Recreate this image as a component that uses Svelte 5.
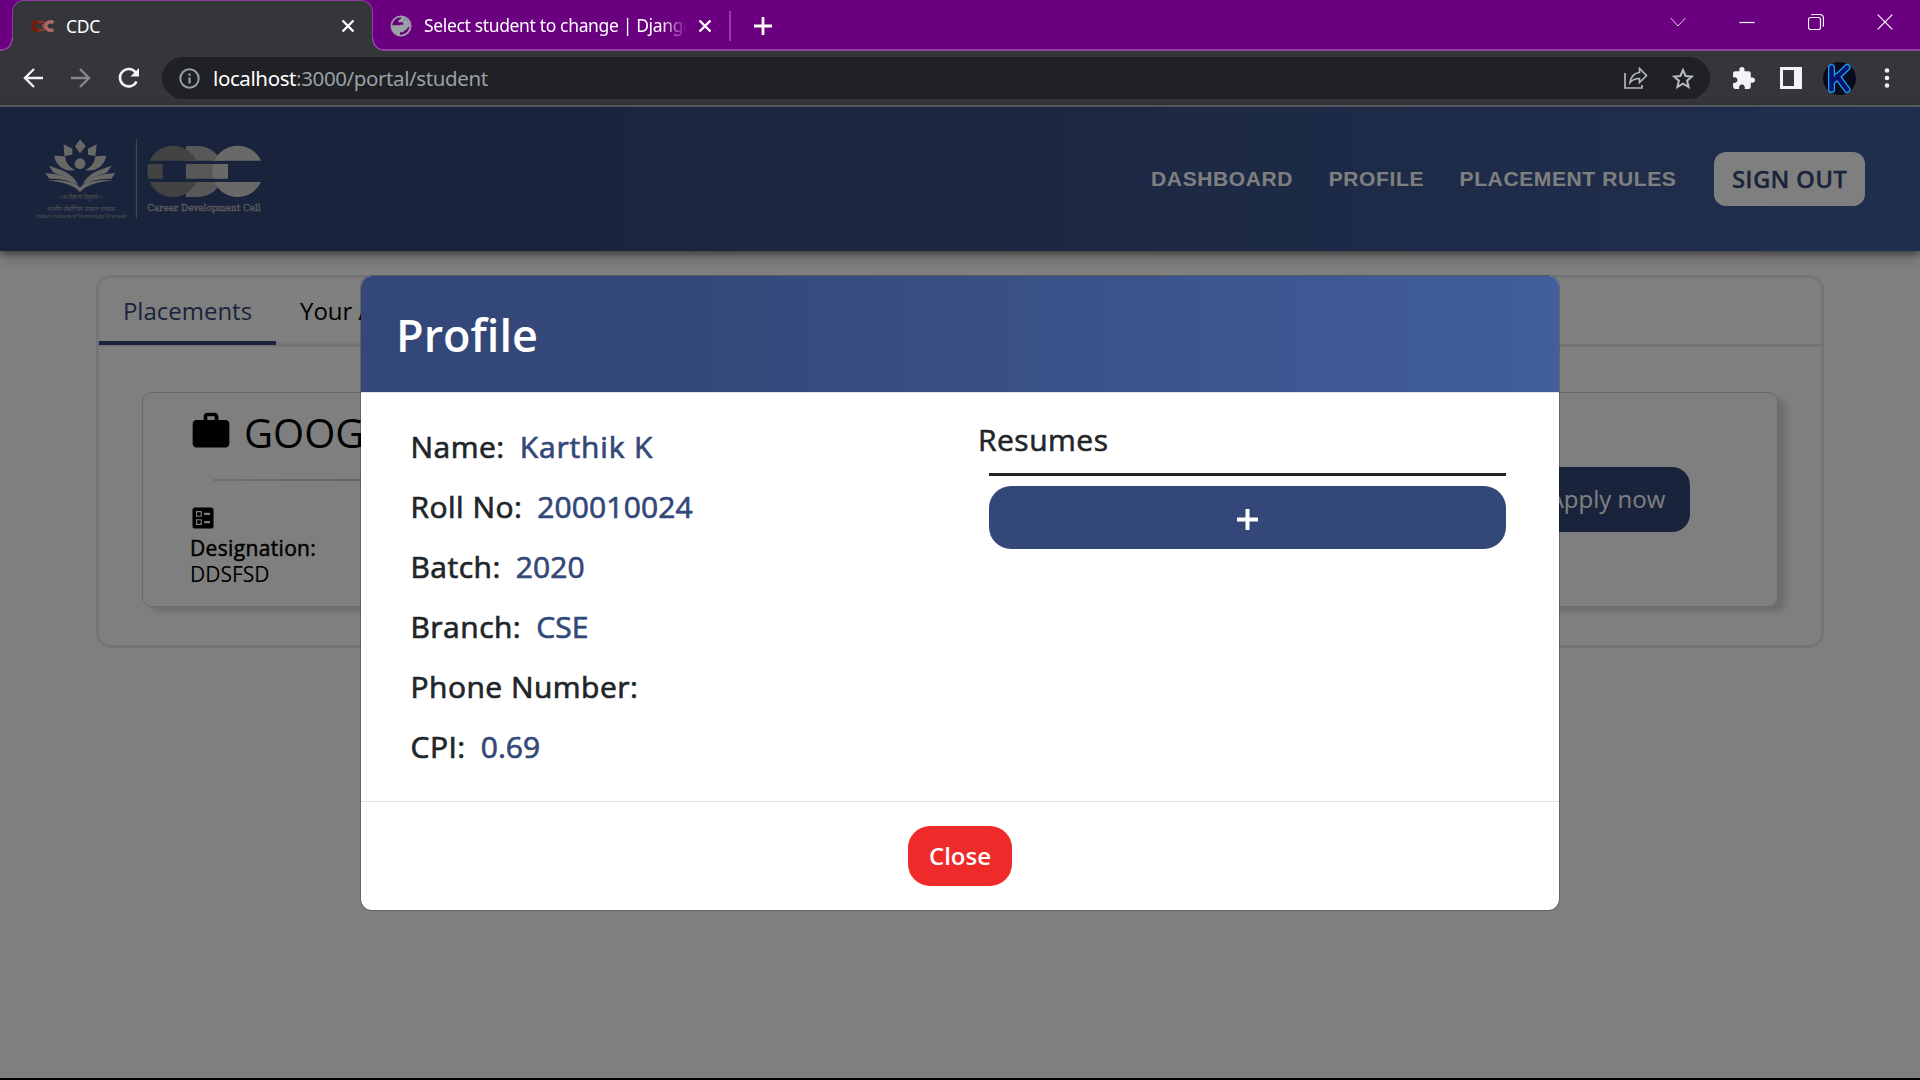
<script>
  const fields = [
    { label: 'Name:', value: 'Karthik K', wide: true },
    { label: 'Roll No:', value: '200010024' },
    { label: 'Batch:', value: '2020' },
    { label: 'Branch:', value: 'CSE' },
    { label: 'Phone Number:', value: '' },
    { label: 'CPI:', value: '0.69' }
  ];
</script>

<div class="window">
  <div class="tabstrip">
    <div class="tab active">
      <svg class="favicon" width="26" height="16" viewBox="0 0 26 16">
        <path d="M11 4.500A4.600 4.200 0 1 0 11 11.500" fill="none" stroke="#7c1a08" stroke-width="3.400" />
        <path d="M9 3.800h3.500a4.200 4.200 0 0 1 0 8.400H9" fill="none" stroke="#7e3a2c" stroke-width="2.600" />
        <path d="M13 8h4.500" stroke="#9a4a3c" stroke-width="3.600" />
        <path d="M24.500 4.500A5 4.200 0 1 0 24.500 11.500" fill="none" stroke="#ad6d62" stroke-width="3.400" />
      </svg>
      <span class="tabtext">CDC</span>
      <svg class="x" width="14" height="14" viewBox="0 0 14 14"><path d="M1.500 1.500l11 11M12.500 1.500l-11 11" /></svg>
    </div>
    <div class="tab second">
      <svg width="22" height="22" viewBox="0 0 22 22">
        <circle cx="11" cy="11" r="10.500" fill="#9aa0a6" />
        <path d="M2.300 10.300C2.600 5.800 6 2.600 10.800 2.200c.6 1.300-.3 2.300-1.700 2.600-1 .3-1 1.700-.6 2.400H12c1.600.2 1.800 1.600 1.200 2.600h-2.500c-.8.800-1.400.5-2.600.5z" fill="#6a0080" />
        <path d="M10 19.700v-2.500h2.600c1.800-.3 1.600-2.200 3.200-2.400 1.200-.2 1.500-.8 1.600-2.200l2.100-.8c-.6 4.600-4.500 8.200-9.500 7.900zM14.500 3.100c2.600 1.200 4.400 3.200 5 5.700-1.600 1.200-3.800.8-4.200-1-.2-1.600-1.300-1.300-1.300-2.700z" fill="#6a0080" />
        <path d="M14.500 2.500l4.500 4v3.500h-2.500c-1-.8-1.500-1.500-2.500-2z" fill="#9aa0a6" />
      </svg>
      <span class="tabtext fade">Select student to change | Django</span>
      <svg class="x" width="14" height="14" viewBox="0 0 14 14"><path d="M1.500 1.500l11 11M12.500 1.500l-11 11" /></svg>
    </div>
    <i class="sep"></i>
    <svg class="plus" width="18" height="18" viewBox="0 0 18 18"><path d="M9 0v18M0 9h18" stroke="#fff" stroke-width="2.800" /></svg>
    <div class="controls">
      <svg width="16" height="10" viewBox="0 0 16 10"><path d="M.7 1l7.300 8 7.300-8" stroke-width=".8" /></svg>
      <svg width="16" height="16" viewBox="0 0 16 16"><path d="M.5 8.500h15" /></svg>
      <svg width="16" height="16" viewBox="0 0 16 16"><rect x=".5" y="3.500" width="12" height="12" rx="2" /><path d="M3.500 1Q4 .5 5 .5h6.500q4 0 4 4V11q0 1-.7 1.500" /></svg>
      <svg width="16" height="16" viewBox="0 0 16 16"><path d="M.7.700l14.600 14.600M15.300.700L.7 15.300" /></svg>
    </div>
  </div>

  <div class="toolbar">
    <svg class="nav" width="20" height="20" viewBox="0 0 20 20"><path d="M20 10H1.800M11 1L2 10l9 9" stroke="#f1f3f4" /></svg>
    <svg class="nav" width="20" height="20" viewBox="0 0 20 20"><path d="M0 10h18.200M9 1l9 9-9 9" stroke="#85878a" /></svg>
    <svg class="nav" width="22" height="22" viewBox="0 0 22 22"><path d="M18.500 14.500A8.700 8.700 0 1 1 18 6" stroke="#f1f3f4" stroke-width="2.600" /><path d="M21 1v8.500h-8.500z" fill="#f1f3f4" /></svg>
    <div class="omnibox">
      <svg width="21" height="21" viewBox="0 0 21 21"><circle cx="10.500" cy="10.500" r="9.200" fill="none" stroke="#9aa0a6" stroke-width="2" /><path d="M10.500 9.500v6M10.500 5.500v2.200" stroke="#9aa0a6" stroke-width="2.200" /></svg>
      <span class="url"><b>localhost</b>:3000/portal/student</span>
      <svg class="share" width="24" height="22" viewBox="0 0 24 22" fill="none" stroke="#b4b7ba" stroke-width="1.700"><path d="M1 6v15h17v-3" /><path d="M6 15.500C7 9.500 10 6 15.500 5.500V1.500L22.500 8.500l-7 7v-4C11 11.500 8.500 12.500 6 15.500z" /></svg>
      <svg class="star" width="22" height="21" viewBox="0 0 22 21"><path d="M11 2l2.600 6 6.400.5-4.900 4.200 1.500 6.300L11 15.600 5.400 19l1.500-6.300L2 8.500 8.400 8z" fill="none" stroke="#b8bbbe" stroke-width="2" /></svg>
    </div>
    <svg class="puzzle" width="25" height="25" viewBox="0 0 24 24" fill="#f1f3f4"><path d="M20.500 11H19V7c0-1.100-.9-2-2-2h-4V3.500a2.500 2.500 0 0 0-5 0V5H4c-1.100 0-2 .9-2 2v3.800h1.500c1.500 0 2.700 1.200 2.700 2.700S5 16.200 3.500 16.200H2V20c0 1.100.9 2 2 2h3.800v-1.500c0-1.500 1.200-2.700 2.700-2.700s2.700 1.200 2.700 2.700V22H17c1.100 0 2-.9 2-2v-4h1.500a2.500 2.500 0 0 0 0-5z" /></svg>
    <svg class="panel" width="22" height="22" viewBox="0 0 22 22"><path fill="#f1f3f4" fill-rule="evenodd" d="M0 0h22v22H0zM3 3v16h11V3z" /></svg>
    <svg class="avatar" width="33" height="33" viewBox="0 0 33 33">
      <circle cx="16.500" cy="16.500" r="16.500" fill="#060a1c" />
      <path d="M8.500 5.500v22M24 5.500L11 18M14 14l10 13.500" fill="none" stroke="#16a4ff" stroke-width="7" stroke-linecap="round" />
      <path d="M8.500 5.500v22M24 5.500L11 18M14 14l10 13.500" fill="none" stroke="#04146a" stroke-width="4.500" stroke-linecap="round" />
    </svg>
    <svg class="dots" width="6" height="20" viewBox="0 0 6 20" fill="#f1f3f4"><circle cx="3" cy="2.500" r="2.300" /><circle cx="3" cy="10" r="2.300" /><circle cx="3" cy="17.500" r="2.300" /></svg>
  </div>

  <div class="page">
    <header>
      <svg class="logo" width="260" height="120" viewBox="0 0 780 360">
        <g fill="#d0d1cf">
          <path d="M180 58l17 21-17 21-15-21zM131 73l26 13v18l-24 4zM230 73l-26 13v18l22 4z" />
          <circle cx="180" cy="131" r="16" />
          <path d="M102 108c12-2 22 0 34 2 1 18 10 30 30 40-32 6-56-10-64-42zM259 108c-12-2-22 0-34 2-1 18-10 30-30 40 32 6 56-10 64-42z" />
          <path d="M87 137c35 12 70 20 88 58-22-24-55-28-76-38zM275 137c-35 12-70 20-88 58 22-24 55-28 74-38z" />
          <path d="M76 160c40 2 78 8 100 38-28-20-60-22-88-22zM286 160c-40 2-78 8-100 38 28-20 60-22 88-22z" />
          <path d="M82 182c40-4 76 0 98 20 22-20 58-24 98-20-40 2-76 10-98 34-22-24-58-32-98-34z" />
        </g>
        <g fill="#a4a5a8" text-anchor="middle" class="tiny">
          <text x="182" y="238" font-size="17" textLength="130" lengthAdjust="spacingAndGlyphs">॥ सा विद्या या विमुक्तये ॥</text>
          <text x="182" y="272" font-size="18" textLength="204" lengthAdjust="spacingAndGlyphs">भारतीय प्रौद्योगिकी संस्थान धारवाड</text>
          <text x="183" y="293" font-size="14.500" textLength="270" lengthAdjust="spacingAndGlyphs">Indian Institute of Technology Dharwad</text>
        </g>
        <path d="M349 57v240" stroke="#96979a" stroke-width="3" />
        <path fill="#b0b1b3" d="M498 78h32c34 0 61 18 73 44H498zM498 132h110v44H498zM498 186h105c-12 27-39 45-73 45h-32z" />
        <path fill="#868789" d="M389 122a77 77 0 0 1 140 0zM389 186a77 77 0 0 0 140 0zM384 132h45q-4 22 0 44h-45q-4-22 0-44z" />
        <path fill="#d2d3d3" d="M583 122a77 77 0 0 1 140 0zM583 186a77 77 0 0 0 140 0zM580 132h44v44h-44q-5-22 0-44z" />
        <text class="slab" x="382" y="274" font-size="28" textLength="340" lengthAdjust="spacingAndGlyphs" fill="#b4b5b7">Career Development Cell</text>
      </svg>
      <nav>
        <a>DASHBOARD</a>
        <a>PROFILE</a>
        <a>PLACEMENT RULES</a>
        <span class="signout">SIGN OUT</span>
      </nav>
    </header>
    <main>
      <div class="tabs">
        <span class="current">Placements</span>
        <span class="other">Your Applications</span>
      </div>
      <section class="job">
        <div class="info">
          <div class="company">
            <svg width="44" height="44" viewBox="0 0 24 24"><path d="M20 6h-4V4c0-1.110-.89-2-2-2h-4c-1.110 0-2 .89-2 2v2H4c-1.110 0-1.990.89-1.990 2L2 19c0 1.110.89 2 2 2h16c1.110 0 2-.89 2-2V8c0-1.110-.89-2-2-2zm-6 0h-4V4h4v2z" /></svg>
            <span>GOOGLE</span>
          </div>
          <hr />
          <svg class="ballot" width="28" height="28" viewBox="0 0 24 24"><path d="M13 9.500h5v-2h-5v2zm0 7h5v-2h-5v2zm6 4.500H5c-1.100 0-2-.9-2-2V5c0-1.100.9-2 2-2h14c1.100 0 2 .9 2 2v14c0 1.100-.9 2-2 2zM6 11h5V6H6v5zm1-4h3v3H7V7zM6 18h5v-5H6v5zm1-4h3v3H7v-3z" /></svg>
          <div class="designation">Designation:</div>
          <div class="role">DDSFSD</div>
        </div>
        <span class="apply">Apply now</span>
      </section>
    </main>

    <div class="backdrop">
      <div class="modal">
        <div class="mhead">Profile</div>
        <div class="mbody">
          <div class="fields">
            {#each fields as f}
              <div class="field"><span>{f.label}</span><span class="val" class:wide={f.wide}>{f.value}</span></div>
            {/each}
          </div>
          <div class="resumes">
            <div class="rtitle">Resumes</div>
            <div class="rule"></div>
            <div class="add"><svg width="21" height="21" viewBox="0 0 21 21"><path d="M10.500 0v21M0 10.500h21" stroke="#fff" stroke-width="4" /></svg></div>
          </div>
        </div>
        <div class="mfoot"><span class="close">Close</span></div>
      </div>
    </div>
  </div>
</div>

<style>
  :global(body) { margin: 0; background: #000; overflow: hidden; }
  * { box-sizing: border-box; }
  svg { display: block; flex: none; }
  .window { width: 1920px; height: 1078px; display: flex; flex-direction: column; font-family: "Open Sans", sans-serif; white-space: nowrap; }

  .tabstrip { height: 51px; display: flex; flex: none; background: #6a0080; border-bottom: 2px solid #8f40a0; }
  .tab { display: flex; align-items: center; height: 51px; }
  .active { width: 361px; margin-left: 12px; background: #35363a; border: 1.500px solid #8f40a0; border-bottom: 0; border-radius: 12px 12px 0 0; padding: 0 17px 0 16px; position: relative; }
  .active::before, .active::after { content: ""; position: absolute; bottom: 0; width: 12px; height: 12px; }
  .active::before { left: -12px; background: radial-gradient(circle at 0 0, #6a0080 10px, #8f40a0 10.500px 11.500px, #35363a 12px); }
  .active::after { right: -12px; background: radial-gradient(circle at 100% 0, #6a0080 10px, #8f40a0 10.500px 11.500px, #35363a 12px); }
  .favicon { margin-right: 11px; }
  .tabtext { font-family: "Noto Sans", "Open Sans", sans-serif; font-size: 17.500px; color: #fff; letter-spacing: -0.350px; position: relative; top: -0.500px; }
  .x { margin-left: auto; fill: none; stroke: #fff; stroke-width: 2.400; }
  .second { width: 340px; padding-left: 17px; }
  .second .x { margin-left: 11px; }
  .fade { width: 263px; margin-left: 12px; overflow: hidden; mask-image: linear-gradient(90deg, #000 90%, transparent 100%); }
  .sep { width: 1.500px; height: 30px; margin: 11px 0 0 16px; background: #8f40a0; }
  .plus { margin: 17px 0 0 23px; }
  .controls { margin-left: auto; display: flex; align-items: center; gap: 53px; padding-right: 27px; height: 43px; fill: none; stroke: #fff; stroke-width: 1.200; }

  .toolbar { height: 56px; flex: none; background: #35363a; border-bottom: 2px solid #5f6063; display: flex; align-items: center; padding-left: 23px; }
  .nav { fill: none; stroke-width: 2.400; margin-right: 28px; }
  .nav:nth-child(3) { margin-left: -1px; }
  .omnibox { width: 1548px; height: 42px; margin-left: -6px; border-radius: 21px; background: #202124; display: flex; align-items: center; padding: 0 16px 0 17px; }
  .url { font-family: "Noto Sans", "Open Sans", sans-serif; font-size: 20.500px; letter-spacing: -0.390px; margin-left: 13px; color: #9aa0a6; }
  .url b { font-weight: 400; color: #fff; }
  .share { margin-left: auto; }
  .star { margin-left: 24px; }
  .puzzle { margin-left: 21px; }
  .panel { margin-left: 24px; }
  .avatar { margin-left: 21px; }
  .dots { margin-left: 28px; }

  .page { flex: 1; background: #fff; position: relative; }
  header { height: 144px; background: linear-gradient(90deg, #334878 25%, #415e9d 100%); box-shadow: 0 3px 6px rgba(0,0,0,.3), 0 5px 14px rgba(0,0,0,.3); display: flex; align-items: center; justify-content: space-between; padding: 0 55px 0 20px; }
  .logo { margin-top: 2px; }
  .tiny { font-family: "Noto Sans", sans-serif; }
  .slab { font-family: "DejaVu Serif", serif; font-stretch: condensed; font-weight: 400; stroke: #b4b5b7; stroke-width: 1; }
  nav { display: flex; align-items: center; color: #fff; font: 700 21px/24px "Liberation Sans", sans-serif; }
  nav a { margin: 0 35.500px 1px 0; letter-spacing: .620px; }
  nav a:nth-child(3) { margin-right: 37.500px; }
  .signout { width: 151px; height: 54px; border-radius: 12px; background: #fff; color: #334878; font: 600 24px/54px "Open Sans", sans-serif; letter-spacing: .250px; -webkit-text-stroke: .300px #334878; text-align: center; }

  main { margin: 24px 96px 0; height: 373px; border: 3px solid #e8e8e8; border-radius: 15px; }
  .tabs { height: 69px; border-bottom: 3px solid #e8e8e8; display: flex; font-size: 24px; line-height: 65px; }
  .current { width: 177px; height: 67px; text-align: center; color: #334878; border-bottom: 4px solid #334878; }
  .other { width: 260px; height: 66px; padding-left: 24px; border-bottom: 2px solid #f0f0f0; }
  .job { margin: 45px 43px 0; height: 215px; border: 1px solid #d2d2d2; border-radius: 10px; box-shadow: 8px 5px 6px rgba(0,0,0,.14); display: flex; justify-content: space-between; align-items: center; padding: 0 87px 0 47px; }
  .info { height: 213px; width: 900px; }
  .company { display: flex; font-size: 40px; line-height: 60px; padding-top: 10px; height: 86px; }
  .company span { margin-left: 11px; }
  .company svg { margin-top: 6px; margin-left: -1px; }
  hr { margin: 0 0 0 23px; height: 2px; border: 0; background: linear-gradient(90deg, #e0e0e0, #a0a0a0 45%, #e0e0e0); }
  .ballot { margin: 23px 0 0 -1px; }
  .designation { font-size: 21px; line-height: 26px; margin-top: 3px; letter-spacing: .340px; -webkit-text-stroke: .500px #000; }
  .role { font-size: 21px; line-height: 26px; }
  .apply { height: 65px; width: 166px; border-radius: 18px; background: #334878; color: #fff; font-size: 24px; line-height: 64px; text-align: center; }

  .backdrop { position: absolute; inset: 0; background: rgba(0,0,0,.5); display: flex; justify-content: center; align-items: flex-start; padding-top: 168px; }
  .modal { width: 1200px; height: 636px; background: #fff; background-clip: padding-box; border: 1px solid rgba(0,0,0,.2); border-radius: 12px; color: #212529; overflow: hidden; display: flex; flex-direction: column; }
  .mhead { height: 117px; flex: none; background: linear-gradient(90deg, #334878 25%, #415e9d 100%); border-bottom: 1px solid #dee2e6; color: #fff; font-size: 45px; font-weight: 600; line-height: 117px; padding-left: 35px; }
  .mbody { flex: 1; display: flex; padding-top: 24px; }
  .fields { width: 617px; padding-left: 49.500px; }
  .field { height: 60px; line-height: 60px; font-size: 30px; letter-spacing: .480px; -webkit-text-stroke: .700px currentColor; display: flex; gap: 15px; }
  .val { color: #334878; letter-spacing: .100px; }
  .wide { letter-spacing: .850px; }
  .rtitle { font-size: 30px; letter-spacing: .500px; -webkit-text-stroke: .600px currentColor; line-height: 40px; margin-top: 3px; }
  .rule { margin: 13px 0 0 11px; width: 517px; height: 3px; background: #212529; }
  .add { margin: 10px 0 0 11px; width: 517px; height: 63px; padding-top: 3px; border-radius: 22px; background: #334878; display: flex; align-items: center; justify-content: center; }
  .mfoot { height: 109px; border-top: 1px solid #dee2e6; display: flex; justify-content: center; align-items: center; }
  .close { width: 104px; height: 60px; border-radius: 22px; background: #ee2a2a; color: #fff; font-size: 24px; font-weight: 600; line-height: 60px; text-align: center; }
</style>
